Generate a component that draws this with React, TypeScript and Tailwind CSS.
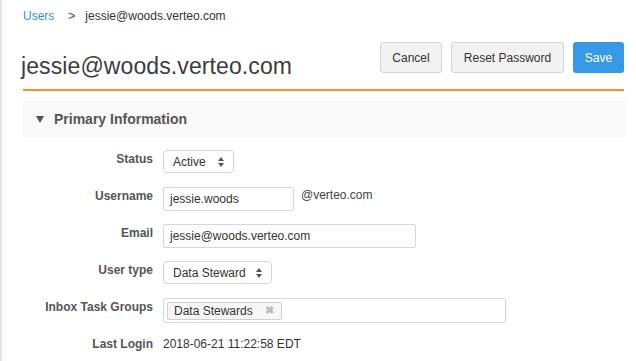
import React from "react";

const Updown = () => (
  <svg width="6" height="10" viewBox="0 0 6 10" className="shrink-0">
    <path d="M3 0 L6 4 L0 4 Z" fill="#555" />
    <path d="M3 10 L6 6 L0 6 Z" fill="#555" />
  </svg>
);

function Row({ label, children, h = "h-[37px]" }: { label: string; children: React.ReactNode; h?: string }) {
  return (
    <div className={`flex items-start ${h}`}>
      <div className="w-[132px] text-right pr-[1px] font-bold text-[12px] text-[#555]">{label}</div>
      <div className="ml-[9px] flex items-start">{children}</div>
    </div>
  );
}

export default function App() {
  return (
    <div
      className="w-[636px] h-[361px] bg-white border-l-2 border-[#e3e3e3] overflow-hidden"
      style={{ fontFamily: '"Liberation Sans", Arial, sans-serif' }}
    >
      <div className="pl-[21px] pr-[10px]">
        <div className="flex items-center h-[31px] text-[12px] pt-[1px]">
          <span className="text-[#3a8fc6]">Users</span>
          <span className="ml-[14px] text-[#444]">&gt;</span>
          <span className="ml-[10px] text-[#333]">jessie@woods.verteo.com</span>
        </div>
        <div className="flex items-start justify-between border-b-2 border-[#f7941d] h-[60px] mr-[2px]">
          <div className="text-[23px] text-[#3d3d3d] mt-[18px] -ml-[2px] tracking-[0.1px]">jessie@woods.verteo.com</div>
          <div className="flex gap-[9px] mt-[11px]">
            <button className="h-[31px] w-[62px] rounded-[3px] border border-[#d4d4d4] bg-[#f2f2f2] text-[12px] text-[#333]">Cancel</button>
            <button className="h-[31px] w-[113px] rounded-[3px] border border-[#d4d4d4] bg-[#f2f2f2] text-[12px] text-[#333]">Reset Password</button>
            <button className="h-[31px] w-[51px] rounded-[3px] bg-[#3699e6] text-[12px] text-white">Save</button>
          </div>
        </div>
        <div className="mt-[10px] h-[36px] bg-[#f9f9f9] flex items-center">
          <svg width="8" height="7" viewBox="0 0 8 7" className="ml-[13px]">
            <path d="M0 0 H8 L4 7 Z" fill="#555" />
          </svg>
          <span className="ml-[10px] text-[14px] font-bold text-[#555]">Primary Information</span>
        </div>
        <div className="mt-[13px] -ml-[1px]">
          <Row label="Status">
            <div className="h-[23px] w-[71px] border border-[#d6d6d6] rounded-[4px] flex items-center justify-between px-[9px] text-[12px] text-[#333] bg-white">
              <span>Active</span>
              <Updown />
            </div>
          </Row>
          <Row label="Username">
            <div className="h-[24px] w-[131px] border border-[#d6d6d6] rounded-[2px] flex items-center px-[6px] text-[12px] text-[#333]">jessie.woods</div>
            <span className="ml-[7px] text-[12px] text-[#444] -mt-[1px]">@verteo.com</span>
          </Row>
          <Row label="Email">
            <div className="h-[24px] w-[253px] border border-[#d6d6d6] rounded-[2px] flex items-center px-[6px] text-[12px] text-[#333]">jessie@woods.verteo.com</div>
          </Row>
          <Row label="User type" h="h-[37px]">
            <div className="h-[23px] w-[109px] border border-[#d6d6d6] rounded-[4px] flex items-center justify-between px-[9px] text-[12px] text-[#333] bg-white">
              <span>Data Steward</span>
              <Updown />
            </div>
          </Row>
          <Row label="Inbox Task Groups" h="h-[37px]">
            <div className="h-[25px] w-[343px] border border-[#d6d6d6] rounded-[2px] flex items-center px-[3px]">
              <div className="h-[18px] w-[115px] border border-[#d0d0d0] rounded-[2px] bg-[#f7f7f7] flex items-center justify-between px-[6px] text-[12px] text-[#333]">
                <span>Data Stewards</span>
                <span className="text-[11px] text-[#bbb] font-bold mr-[1px]">✖</span>
              </div>
            </div>
          </Row>
          <Row label="Last Login">
            <span className="text-[12px] text-[#333]">2018-06-21 11:22:58 EDT</span>
          </Row>
        </div>
      </div>
    </div>
  );
}
